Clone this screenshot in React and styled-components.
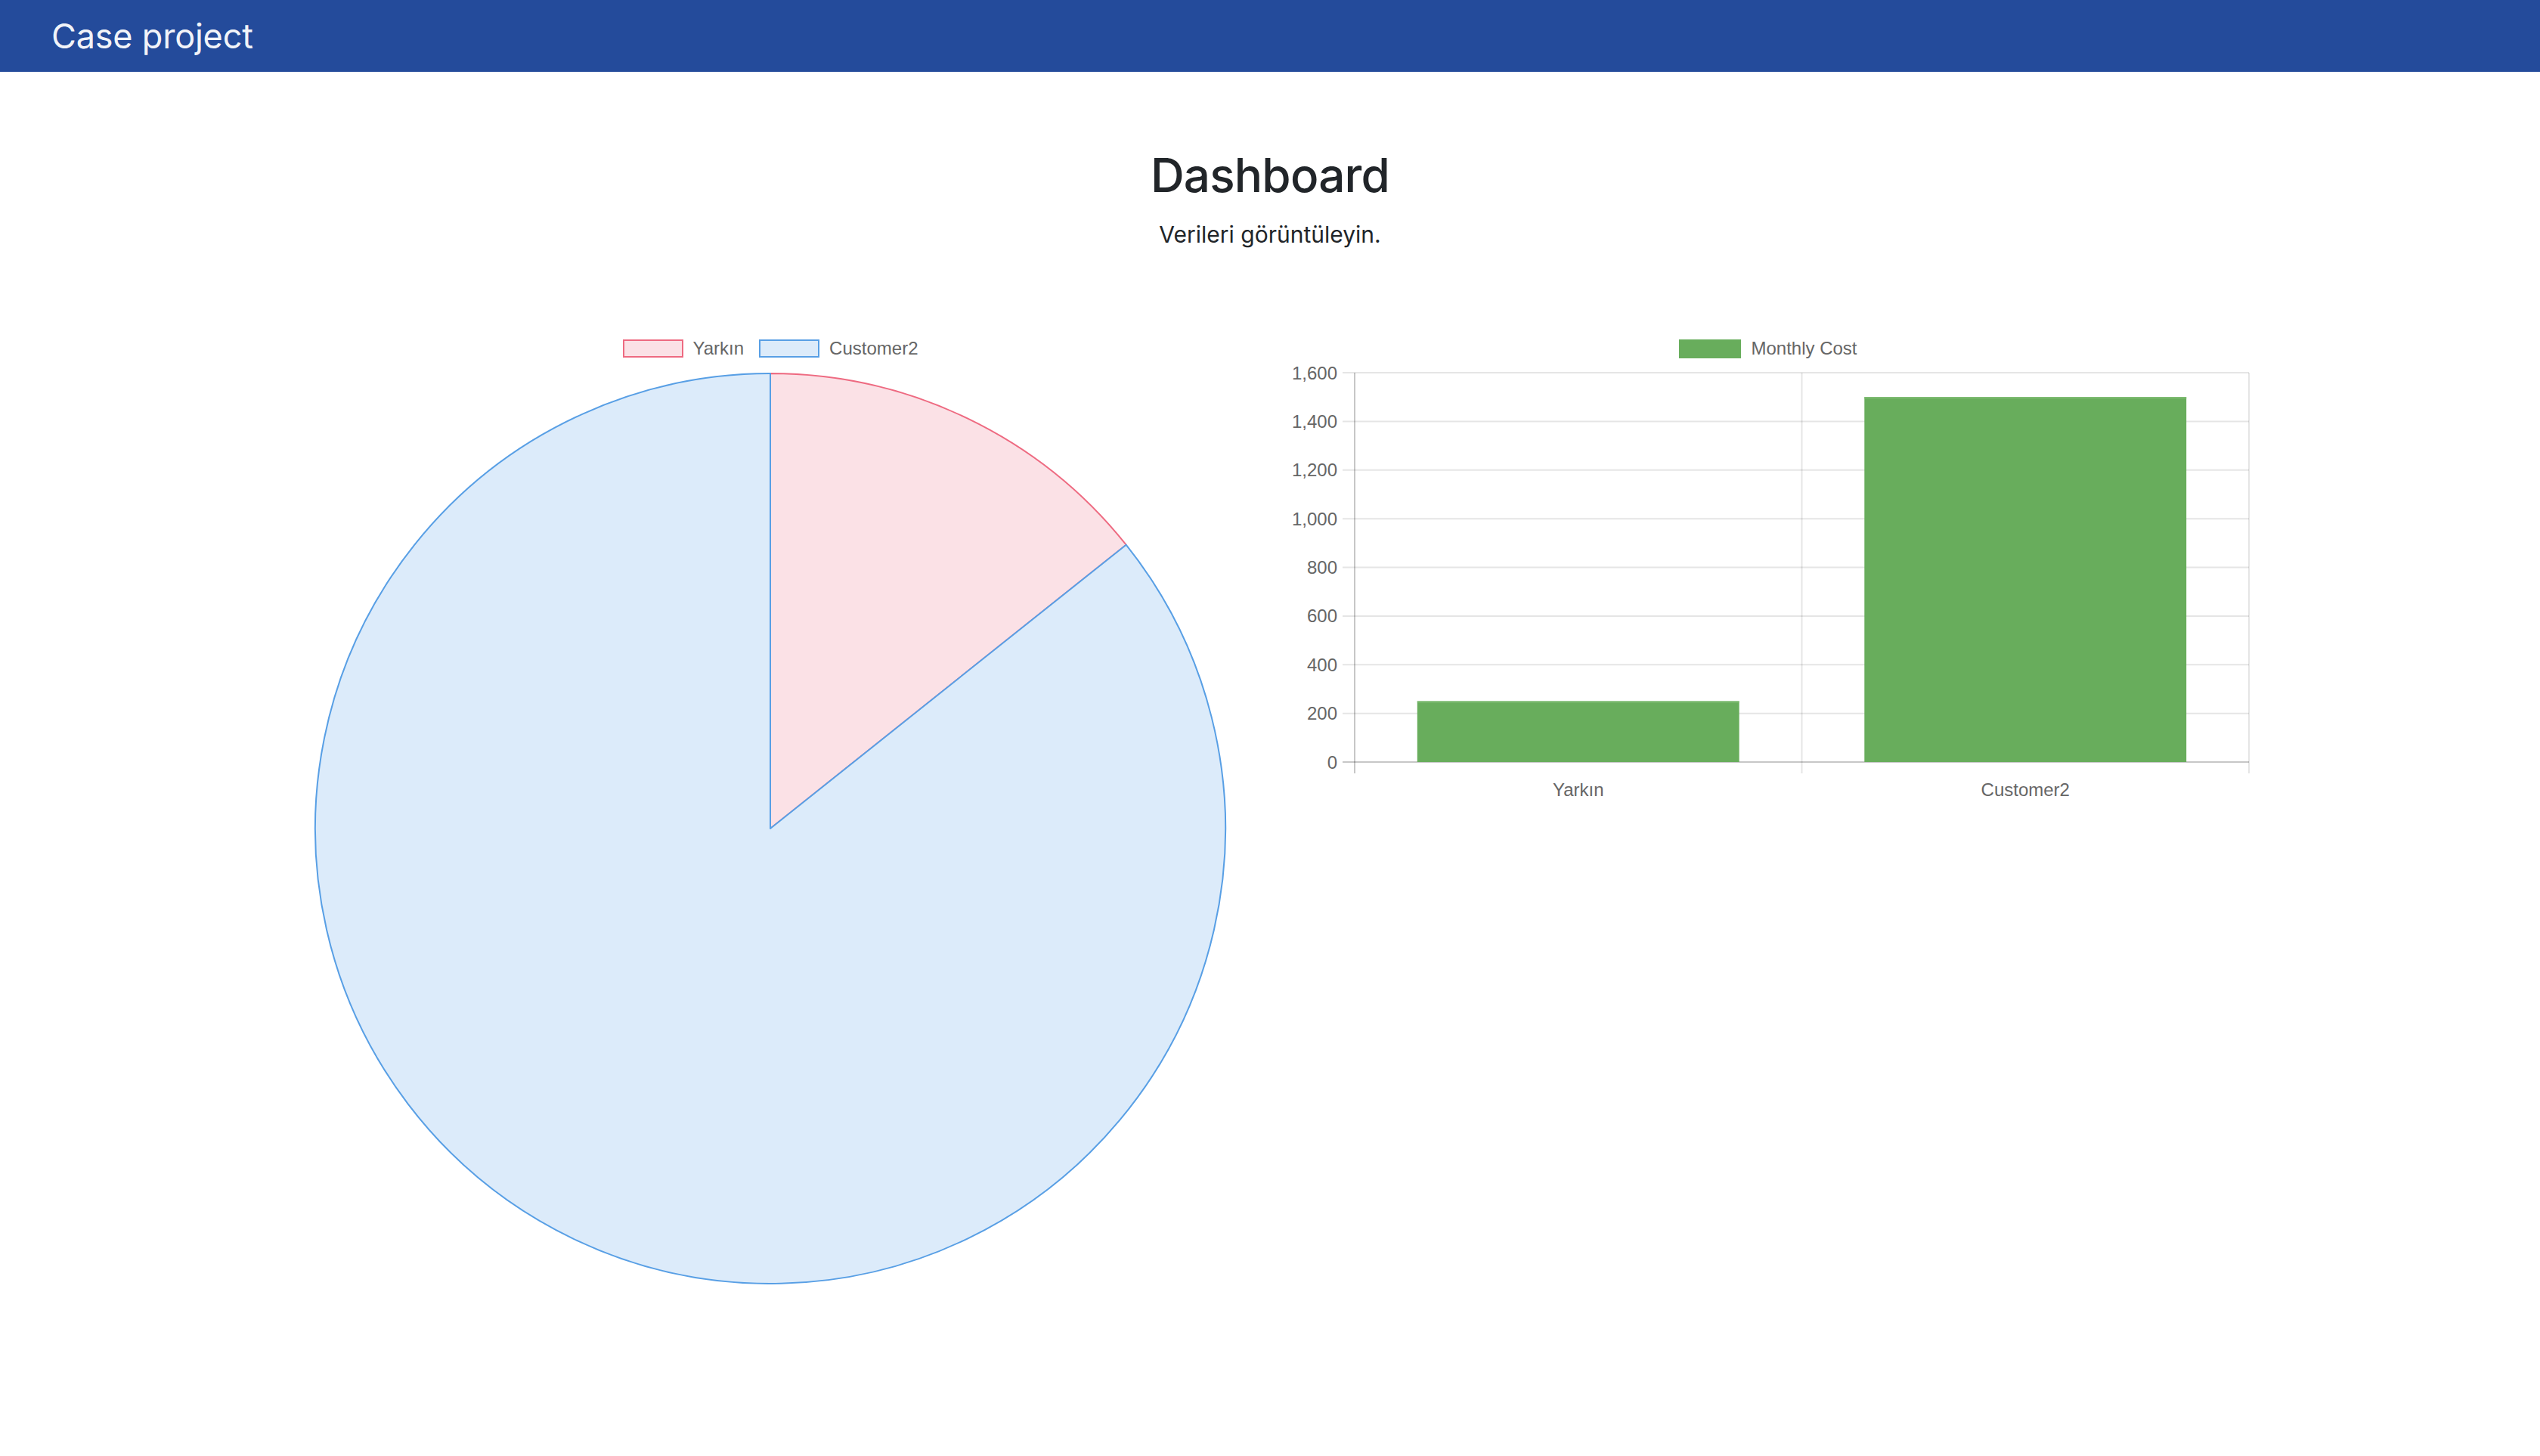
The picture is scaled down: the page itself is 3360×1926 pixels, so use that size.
import React from "react";
import styled, { createGlobalStyle } from "styled-components";

const GlobalStyle = createGlobalStyle`
  html, body { margin: 0; padding: 0; background: #ffffff; }
  body {
    font-family: Inter, "Noto Sans", "Liberation Sans", sans-serif;
    color: #212529;
  }
`;

const Navbar = styled.header`
  height: 95px;
  background: #244b9b;
  display: flex;
  align-items: center;
  padding-left: 68px;
  box-sizing: border-box;
`;

const Brand = styled.span`
  font-size: 45px;
  color: rgba(255, 255, 255, 0.96);
  font-weight: 400;
  letter-spacing: -0.2px;
`;

const Main = styled.main`
  display: flex;
  flex-direction: column;
  align-items: center;
`;

const Title = styled.h1`
  margin: 98px 0 0;
  font-size: 62px;
  line-height: 77px;
  font-weight: 500;
  letter-spacing: -0.8px;
  color: #212529;
`;

const Lead = styled.p`
  margin: 19px 0 0;
  font-size: 30px;
  line-height: 43px;
  color: #212529;
`;

const ChartsRow = styled.section`
  align-self: stretch;
  display: flex;
  gap: 81px;
  padding-left: 416px;
  margin-top: 97px;
`;

const ChartCard = styled.div`
  width: ${(p) => p.$w}px;
  display: flex;
  flex-direction: column;
`;

const Legend = styled.div`
  height: 64px;
  display: flex;
  justify-content: center;
  align-items: center;
  gap: 20px;
  font-family: "Liberation Sans", Arial, sans-serif;
  font-size: 24px;
  color: #666666;
`;

const LegendItem = styled.div`
  display: flex;
  align-items: center;
  gap: 13px;
`;

const Swatch = styled.span`
  width: ${(p) => p.$w || 80}px;
  height: ${(p) => p.$h || 24}px;
  box-sizing: border-box;
  background: ${(p) => p.$fill};
  border: 2px solid ${(p) => p.$border};
`;

const ChartSvg = styled.svg`
  display: block;
  overflow: visible;
  font-family: "Liberation Sans", Arial, sans-serif;
`;

const pieData = [
  { label: "Yarkın", value: 250, fill: "#fbe1e6", stroke: "#ee6a81" },
  { label: "Customer2", value: 1500, fill: "#dcebfa", stroke: "#589fe5" },
];

function PieChart() {
  const size = 1206;
  const c = size / 2;
  const r = 602;
  const total = pieData.reduce((s, d) => s + d.value, 0);
  let start = 0;
  const slices = pieData.map((d) => {
    const a0 = start;
    const a1 = start + (d.value / total) * Math.PI * 2;
    start = a1;
    const x0 = c + r * Math.sin(a0);
    const y0 = c - r * Math.cos(a0);
    const x1 = c + r * Math.sin(a1);
    const y1 = c - r * Math.cos(a1);
    const large = a1 - a0 > Math.PI ? 1 : 0;
    const path = `M ${c} ${c} L ${x0} ${y0} A ${r} ${r} 0 ${large} 1 ${x1} ${y1} Z`;
    return { ...d, path };
  });
  return (
    <ChartCard $w={size}>
      <Legend>
        {pieData.map((d) => (
          <LegendItem key={d.label}>
            <Swatch $fill={d.fill} $border={d.stroke} />
            <span>{d.label}</span>
          </LegendItem>
        ))}
      </Legend>
      <ChartSvg width={size} height={size} viewBox={`0 0 ${size} ${size}`}>
        {slices.map((s) => (
          <path
            key={s.label}
            d={s.path}
            fill={s.fill}
            stroke={s.stroke}
            strokeWidth="2"
            strokeLinejoin="round"
          />
        ))}
      </ChartSvg>
    </ChartCard>
  );
}

const barData = [
  { label: "Yarkın", value: 250 },
  { label: "Customer2", value: 1500 },
];

function BarChart() {
  const W = 1272;
  const X0 = 89;
  const X1 = 1272;
  const H = 515;
  const max = 1600;
  const ticks = [0, 200, 400, 600, 800, 1000, 1200, 1400, 1600];
  const y = (v) => H - (v / max) * H;
  const cat = (X1 - X0) / barData.length;
  const barW = cat * 0.72;
  const grid = "rgba(0,0,0,0.1)";
  const axis = "rgba(0,0,0,0.22)";
  return (
    <ChartCard $w={W}>
      <Legend>
        <LegendItem>
          <Swatch $fill="#68ad5c" $border="#68ad5c" $w={82} $h={25} />
          <span>Monthly Cost</span>
        </LegendItem>
      </Legend>
      <ChartSvg width={W + 2} height={580} viewBox={`0 0 ${W + 2} 580`}>
        {ticks.map((t) => (
          <g key={t}>
            <line
              x1={X0 - 16}
              x2={X1}
              y1={y(t)}
              y2={y(t)}
              stroke={t === 0 ? axis : grid}
              strokeWidth="2"
            />
            <text
              x={66}
              y={y(t)}
              textAnchor="end"
              dominantBaseline="central"
              fontSize="24"
              fill="#666666"
            >
              {t.toLocaleString("en-US")}
            </text>
          </g>
        ))}
        {[0, 1, 2].map((i) => (
          <line
            key={i}
            x1={X0 + i * cat}
            x2={X0 + i * cat}
            y1={0}
            y2={H + 15}
            stroke={i === 0 ? axis : grid}
            strokeWidth="2"
          />
        ))}
        {barData.map((d, i) => {
          const cx = X0 + cat * (i + 0.5);
          return (
            <g key={d.label}>
              <rect
                x={cx - barW / 2}
                y={y(d.value)}
                width={barW}
                height={H - y(d.value)}
                fill="#68ad5c"
              />
              <line
                x1={cx - barW / 2}
                x2={cx + barW / 2}
                y1={y(d.value) + 1}
                y2={y(d.value) + 1}
                stroke="#7dbb70"
                strokeWidth="2"
              />
              <text
                x={cx}
                y={551}
                textAnchor="middle"
                dominantBaseline="central"
                fontSize="24"
                fill="#666666"
              >
                {d.label}
              </text>
            </g>
          );
        })}
      </ChartSvg>
    </ChartCard>
  );
}

export default function App() {
  return (
    <>
      <GlobalStyle />
      <Navbar>
        <Brand>Case project</Brand>
      </Navbar>
      <Main>
        <Title>Dashboard</Title>
        <Lead>Verileri görüntüleyin.</Lead>
        <ChartsRow>
          <PieChart />
          <BarChart />
        </ChartsRow>
      </Main>
    </>
  );
}
